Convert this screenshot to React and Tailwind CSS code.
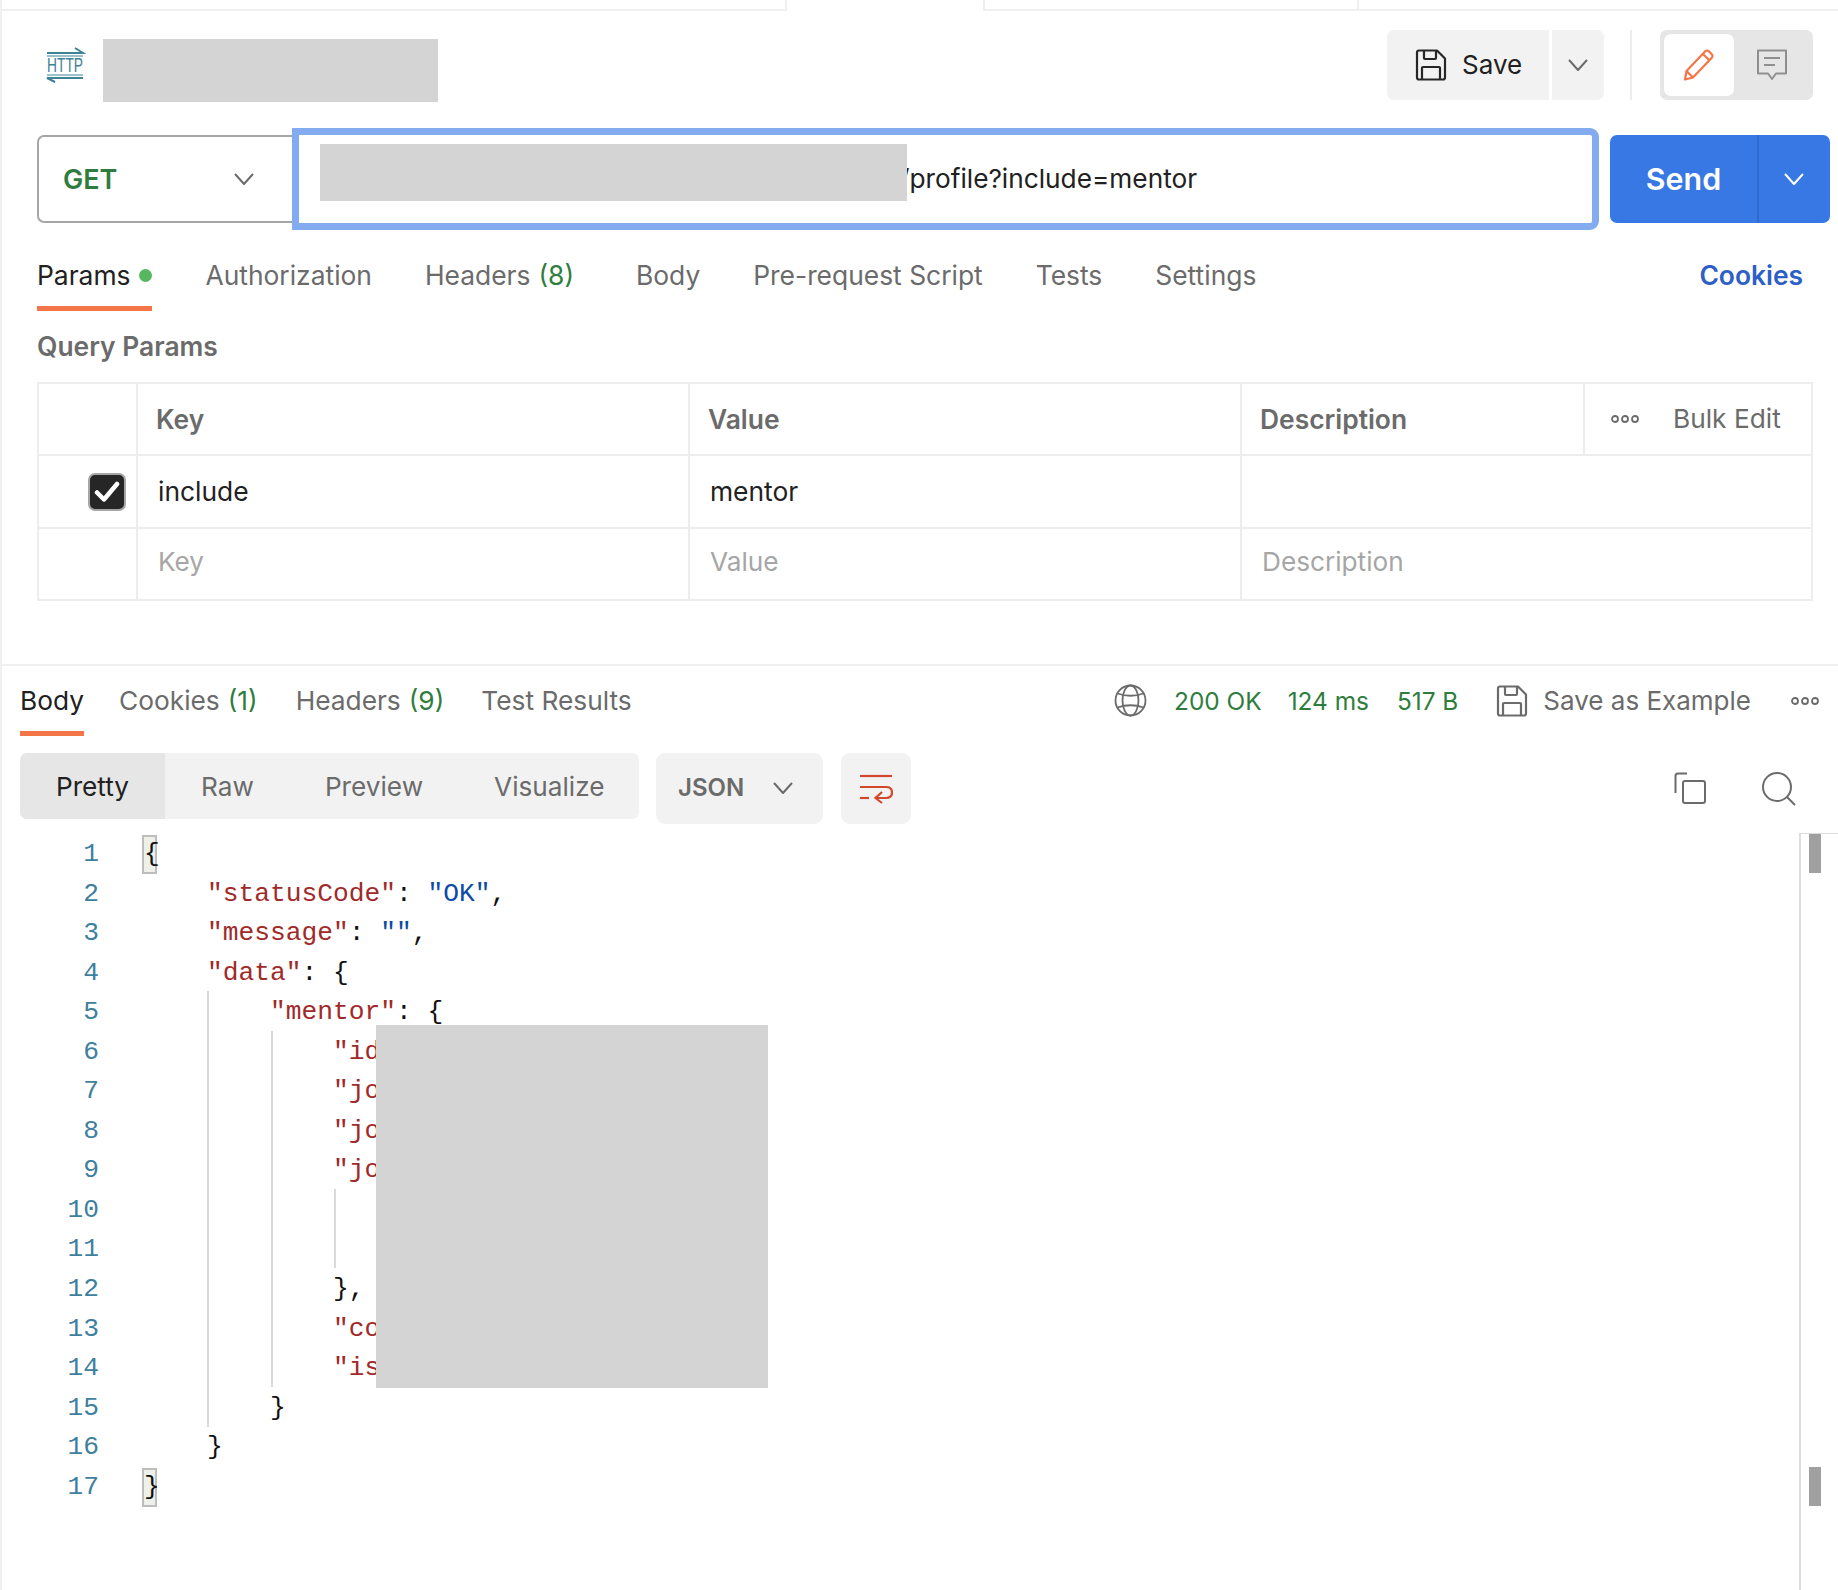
const Chevron = ({ className = "", color = "#6b6b6b" }) => (
  <svg className={className} width="20" height="13" viewBox="0 0 20 13" fill="none">
    <path d="M1.5 1.5 L10 11 L18.5 1.5" stroke={color} strokeWidth="2" strokeLinecap="round" strokeLinejoin="round" />
  </svg>
);

const Floppy = ({ color, className = "" }) => (
  <svg className={className} width="32" height="32" viewBox="0 0 32 32" fill="none" stroke={color} strokeWidth="2.2" strokeLinejoin="round">
    <path d="M2 3.5 Q2 1.5 4 1.5 H22 L30 9.5 V28.5 Q30 30.5 28 30.5 H4 Q2 30.5 2 28.5 Z" />
    <path d="M9 1.5 V9 Q9 10 10 10 H20 Q21 10 21 9 V1.5" />
    <path d="M7 30.5 V19 Q7 18 8 18 H24 Q25 18 25 19 V30.5" />
  </svg>
);

const Dots = () => (
  <svg width="28" height="10" viewBox="0 0 28 10" fill="none" stroke="#6b6b6b" strokeWidth="1.8">
    <circle cx="4" cy="5" r="3" />
    <circle cx="14" cy="5" r="3" />
    <circle cx="24" cy="5" r="3" />
  </svg>
);

const HttpIcon = () => (
  <svg className="overflow-visible" width="38" height="36" viewBox="0 0 38 36" fill="none" stroke="#3d8296" strokeWidth="2">
    <path d="M0 6 H36 L28 1" />
    <path d="M0 9 H36" strokeWidth="1" />
    <text x="0" y="25" fontFamily="Liberation Sans, sans-serif" fontSize="19.5" fill="#3d8296" stroke="none" textLength="36" lengthAdjust="spacingAndGlyphs">HTTP</text>
    <path d="M0 28 H36" strokeWidth="1" />
    <path d="M36 31 H0 L8 35" />
  </svg>
);

const Tab = ({ active, label, count, dot, ml = "" }) => (
  <div className={`flex items-center pt-[29px] pb-[15px] border-b-[5px] h-[81px] ${ml} ${active ? "border-[#f37548]" : "border-transparent"}`}>
    <span className={`text-[26.4px] leading-[32px] ${active ? "text-[#212121]" : "text-[#6b6b6b]"}`}>{label}</span>
    {count && <span className="text-[26.4px] leading-[32px] text-[#2f7d3e] ml-[8px]">{count}</span>}
    {dot && <span className="w-[13px] h-[13px] rounded-full bg-[#56b760] ml-[9px]" />}
  </div>
);

const RTab = ({ active, label, count, ml = "" }) => (
  <div className={`flex items-center pt-[19px] pb-[14px] border-b-[5px] h-[70px] ${ml} ${active ? "border-[#f37548]" : "border-transparent"}`}>
    <span className={`text-[26.3px] leading-[32px] ${active ? "text-[#212121]" : "text-[#6b6b6b]"}`}>{label}</span>
    {count && <span className="text-[26.3px] leading-[32px] text-[#2f7d3e] ml-[8px]">{count}</span>}
  </div>
);

const K = ({ children }) => <span className="text-[#a02a2a]">{children}</span>;
const S = ({ children }) => <span className="text-[#0b4aa5]">{children}</span>;
const Brace = ({ children }) => (
  <span className="inline-block w-[15px] h-[39px] leading-[35px] border-2 border-[#bdbdbd] bg-[#eef0ea] text-center -ml-[2px]">{children}</span>
);

const lines = [
  <Brace>{"{"}</Brace>,
  <>{"    "}<K>"statusCode"</K>: <S>"OK"</S>,</>,
  <>{"    "}<K>"message"</K>: <S>""</S>,</>,
  <>{"    "}<K>"data"</K>: {"{"}</>,
  <>{"        "}<K>"mentor"</K>: {"{"}</>,
  <>{"            "}<K>"id</K></>,
  <>{"            "}<K>"jo</K></>,
  <>{"            "}<K>"jo</K></>,
  <>{"            "}<K>"jo</K></>,
  <></>,
  <></>,
  <>{"            "}{"},"}</>,
  <>{"            "}<K>"co</K></>,
  <>{"            "}<K>"is</K></>,
  <>{"        "}{"}"}</>,
  <>{"    "}{"}"}</>,
  <Brace>{"}"}</Brace>,
];

export default function App() {
  return (
    <div className="relative w-[1838px] h-[1590px] overflow-hidden bg-white border-l-2 border-[#f0f0f0] font-['Inter',sans-serif]">
      {/* top tab strip */}
      <div className="flex h-[11px]">
        <div className="w-[785px] border-b-2 border-r-2 border-[#f0f0f0]" />
        <div className="w-[196px]" />
        <div className="w-[376px] border-b-2 border-l-2 border-r-2 border-[#f0f0f0]" />
        <div className="flex-1 border-b-2 border-[#f0f0f0]" />
      </div>

      {/* title row */}
      <div className="flex items-start h-[70px] mt-[19px] pl-[45px]">
        <div className="mt-[17px]"><HttpIcon /></div>
        <div className="w-[335px] h-[63px] bg-[#d4d4d4] mt-[9px] ml-[18px]" />
        <div className="flex items-center ml-auto mr-[25px] h-full">
          <div className="flex items-center w-[162px] h-full bg-[#f2f2f2] rounded-l-[7px] pl-[28px]">
            <Floppy color="#262626" />
            <span className="text-[26px] text-[#212121] ml-[15px] leading-[32px]">Save</span>
          </div>
          <div className="flex items-center justify-center w-[52px] h-full bg-[#f2f2f2] rounded-r-[7px] ml-[3px]">
            <Chevron />
          </div>
          <div className="w-[2px] h-full bg-[#ededed] ml-[26px]" />
          <div className="flex items-center w-[153px] h-full bg-[#e6e6e6] rounded-[7px] ml-[28px] pl-[4px]">
            <div className="flex items-center justify-center w-[70px] h-[62px] bg-white rounded-[7px]">
              <svg width="32" height="32" viewBox="0 0 32 32" fill="none" stroke="#f37548" strokeWidth="2.2" strokeLinejoin="round">
                <path d="M2 30.5 L3.5 22 L22.5 2 Q24 1 25.5 2 L29 5.5 Q30 7 29 8.5 L10 28.5 Z" />
                <path d="M20 5 L26.5 11.5" />
                <path d="M3.5 22 L10 28.5" />
              </svg>
            </div>
            <svg className="ml-[22px]" width="32" height="32" viewBox="0 0 32 32" fill="none" stroke="#8f8f8f" strokeWidth="2">
              <path d="M2 1.5 H30 V24.5 H20 L16 30 L12 24.5 H2 Z" strokeLinejoin="round" />
              <path d="M8 9 H24 M8 16 H19" />
            </svg>
          </div>
        </div>
      </div>

      {/* request row */}
      <div className="flex items-center h-[102px] mt-[28px] pl-[35px]">
        <div className="flex items-center justify-between w-[255px] h-[88px] border-2 border-r-0 border-[#a6a6a6] rounded-l-[7px] pl-[24px] pr-[38px]">
          <span className="text-[27px] leading-[32px] font-semibold text-[#2f7d3e] pt-[2px]">GET</span>
          <Chevron />
        </div>
        <div className="flex items-center w-[1307px] h-[102px] border-[7px] border-[#82acef] rounded-r-[9px] pl-[21px]">
          <div className="relative z-10 w-[587px] h-[57px] bg-[#d4d4d4] mb-[13px]" />
          <span className="text-[26.25px] leading-[32px] text-[#212121] -ml-[7px]">/profile?include=mentor</span>
        </div>
        <div className="flex items-center w-[220px] h-[88px] bg-[#3878e4] rounded-[7px] ml-[11px]">
          <div className="flex items-center justify-center w-[149px] h-full border-r-2 border-[#2f6ad0]">
            <span className="text-[30.4px] leading-[36px] font-semibold text-white">Send</span>
          </div>
          <Chevron className="ml-[25px]" color="#ffffff" />
        </div>
      </div>

      {/* request tabs */}
      <div className="flex pl-[35px] pr-[35px]">
        <Tab active label="Params" dot />
        <Tab label="Authorization" ml="ml-[53px]" />
        <Tab label="Headers" count="(8)" ml="ml-[53px]" />
        <Tab label="Body" ml="ml-[62px]" />
        <Tab label="Pre-request Script" ml="ml-[53px]" />
        <Tab label="Tests" ml="ml-[53px]" />
        <Tab label="Settings" ml="ml-[53px]" />
        <div className="ml-auto pt-[29px] text-[26.4px] leading-[32px] font-semibold text-[#2d60c6]">Cookies</div>
      </div>

      <div className="pl-[35px] pt-[19px] pb-[20px] text-[26.4px] leading-[32px] font-semibold text-[#6b6b6b]">Query Params</div>

      {/* params table */}
      <div className="ml-[35px] w-[1776px] h-[219px] border-2 border-[#ededed] flex flex-col text-[26.4px] leading-[32px]">
        <div className="flex h-[72px] border-b-2 border-[#ededed] font-semibold text-[#6b6b6b]">
          <div className="w-[99px] border-r-2 border-[#ededed]" />
          <div className="w-[552px] border-r-2 border-[#ededed] flex items-center pl-[18px]">Key</div>
          <div className="w-[552px] border-r-2 border-[#ededed] flex items-center pl-[18px]">Value</div>
          <div className="w-[343px] border-r-2 border-[#ededed] flex items-center pl-[18px]">Description</div>
          <div className="flex-1 flex items-center pl-[26px] font-normal">
            <Dots />
            <span className="ml-[34px] text-[26.3px]">Bulk Edit</span>
          </div>
        </div>
        <div className="flex h-[73px] border-b-2 border-[#ededed] text-[#212121]">
          <div className="w-[99px] border-r-2 border-[#ededed] flex items-center justify-end pr-[10px]">
            <div className="flex items-center justify-center w-[38px] h-[38px] rounded-[7px] bg-[#262626] border-2 border-[#a6a6a6]">
              <svg width="26" height="22" viewBox="0 0 26 22" fill="none" stroke="#ffffff" strokeWidth="4.5" strokeLinecap="round" strokeLinejoin="round">
                <path d="M3 11.5 L10 18.5 L23 3" />
              </svg>
            </div>
          </div>
          <div className="w-[552px] border-r-2 border-[#ededed] flex items-center pl-[20px] pb-[2px]">include</div>
          <div className="w-[552px] border-r-2 border-[#ededed] flex items-center pl-[20px] pb-[2px]">mentor</div>
          <div className="flex-1" />
        </div>
        <div className="flex flex-1 text-[#a6a6a6] text-[26.2px]">
          <div className="w-[99px] border-r-2 border-[#ededed]" />
          <div className="w-[552px] border-r-2 border-[#ededed] flex items-center pl-[20px] pb-[4px]">Key</div>
          <div className="w-[552px] border-r-2 border-[#ededed] flex items-center pl-[20px] pb-[4px]">Value</div>
          <div className="flex-1 flex items-center pl-[20px] pb-[4px]">Description</div>
        </div>
      </div>

      {/* response */}
      <div className="mt-[63px] border-t-2 border-[#f0f0f0]">
        <div className="flex items-start pl-[18px] pr-[19px]">
          <RTab active label="Body" />
          <RTab label="Cookies" count="(1)" ml="ml-[35px]" />
          <RTab label="Headers" count="(9)" ml="ml-[38px]" />
          <RTab label="Test Results" ml="ml-[37px]" />
          <div className="flex items-center ml-auto h-[70px] pb-[1px] text-[24.4px] leading-[32px]">
            <svg width="33" height="33" viewBox="0 0 33 33" fill="none" stroke="#6b6b6b" strokeWidth="1.8">
              <circle cx="16.5" cy="16.5" r="15" />
              <ellipse cx="16.5" cy="16.5" rx="8" ry="15" />
              <path d="M3.5 9.5 Q16.5 14 29.5 9.5 M3.5 23.5 Q16.5 19 29.5 23.5" />
            </svg>
            <span className="text-[#2f7d3e] ml-[27px]">200 OK</span>
            <span className="text-[#2f7d3e] ml-[26px]">124 ms</span>
            <span className="text-[#2f7d3e] ml-[28px]">517 B</span>
            <Floppy color="#6b6b6b" className="ml-[38px]" />
            <span className="text-[26px] text-[#6b6b6b] ml-[15px]">Save as Example</span>
            <span className="ml-[40px]"><Dots /></span>
          </div>
        </div>

        {/* response toolbar */}
        <div className="flex items-start mt-[17px] pl-[18px] pr-[42px]">
          <div className="flex w-[619px] h-[66px] bg-[#f2f2f2] rounded-[7px] overflow-hidden text-[26.2px] text-[#6b6b6b]">
            <div className="flex items-center justify-center w-[145px] bg-[#e6e6e6] text-[#212121] pt-[2px]">Pretty</div>
            <div className="flex items-center pl-[36px] pt-[2px]">Raw</div>
            <div className="flex items-center pl-[71px] pt-[2px]">Preview</div>
            <div className="flex items-center pl-[71px] pt-[2px]">Visualize</div>
          </div>
          <div className="flex items-center w-[167px] h-[71px] bg-[#f2f2f2] rounded-[9px] ml-[17px] pl-[22px]">
            <span className="text-[24px] font-semibold text-[#6b6b6b] pb-[2px]">JSON</span>
            <Chevron className="ml-[29px]" />
          </div>
          <div className="flex items-center justify-center w-[70px] h-[71px] bg-[#f2f2f2] rounded-[9px] ml-[18px]">
            <svg width="34" height="30" viewBox="0 0 34 30" fill="none" stroke="#d1492a" strokeWidth="2.2">
              <path d="M1 2 H33" />
              <path d="M1 13 H27 Q33 13 33 18.5 Q33 24 27 24 H17" />
              <path d="M23 18 L16.5 24 L23 29" />
              <path d="M1 24 H10" />
            </svg>
          </div>
          <svg className="ml-auto mt-[19px]" width="32" height="32" viewBox="0 0 32 32" fill="none" stroke="#6b6b6b" strokeWidth="2">
            <path d="M13 1.5 H4 Q1.5 1.5 1.5 4 V21" />
            <rect x="9" y="9" width="22" height="22" rx="2" />
          </svg>
          <svg className="ml-[56px] mt-[19px]" width="34" height="34" viewBox="0 0 34 34" fill="none" stroke="#6b6b6b" strokeWidth="2">
            <circle cx="15" cy="15" r="14" />
            <path d="M25 25 L33 33" />
          </svg>
        </div>

        {/* code */}
        <div className="relative flex h-[760px] mt-[9px] text-[26.25px] leading-[42px] font-['Liberation_Mono',monospace]">
          <div className="w-[97px] text-right text-[#3f7f9e]">
            {lines.map((_, i) => <div key={i} className="h-[39.56px]">{i + 1}</div>)}
          </div>
          <div className="flex-1 pl-[45px] text-[#111111] whitespace-pre">
            {lines.map((l, i) => <div key={i} className="h-[39.56px]">{l}</div>)}
          </div>
          <div className="w-[39px] border-l-2 border-t border-[#dcdcdc] pl-[8px]">
            <div className="w-[12px] h-[39px] bg-[#a0a0a0]" />
            <div className="w-[12px] h-[39px] bg-[#a0a0a0] mt-[594px]" />
          </div>
          {/* indent guides and redaction lie over the code */}
          <div className="absolute left-[205px] top-[158px] w-[2px] h-[436px] bg-[#d9d9d9]" />
          <div className="absolute left-[269px] top-[198px] w-[2px] h-[356px] bg-[#d9d9d9]" />
          <div className="absolute left-[332px] top-[356px] w-[2px] h-[79px] bg-[#d9d9d9]" />
          <div className="absolute left-[374px] top-[192px] w-[392px] h-[363px] bg-[#d4d4d4]" />
        </div>
      </div>
    </div>
  );
}
